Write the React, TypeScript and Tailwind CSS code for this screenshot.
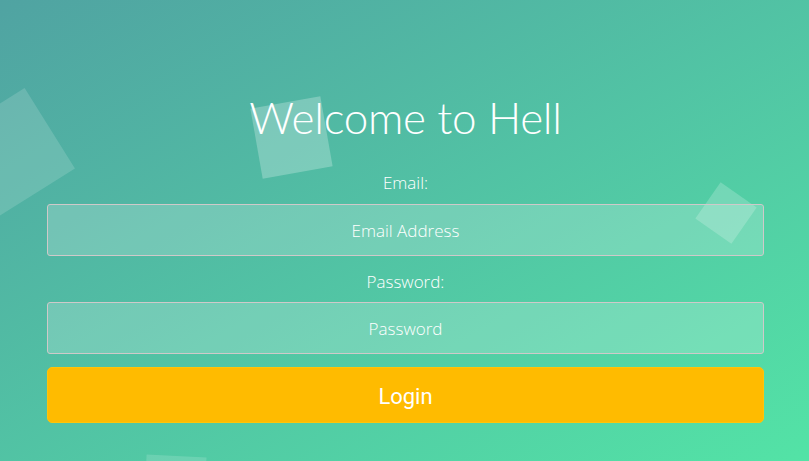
export default function App() {
  return (
    <div className="relative w-full h-[461px] overflow-hidden bg-[linear-gradient(to_bottom_right,#50a3a2_0%,#53e3a6_100%)] font-['Open_Sans',sans-serif] text-white">
      {/* floating squares */}
      <div className="absolute left-[-38px] top-[106px] w-[95px] h-[95px] bg-white/15 rotate-[58deg]" />
      <div className="absolute left-[256px] top-[102px] w-[71px] h-[71px] bg-white/25 rotate-[-10deg]" />
      <div className="absolute left-[704px] top-[191px] w-[44px] h-[44px] bg-white/20 rotate-[35deg]" />
      <div className="absolute left-[145px] top-[456px] w-[60px] h-[60px] bg-white/15 rotate-[3deg]" />

      <div className="relative ml-[47px] mr-[45px] pt-[91px] flex flex-col items-stretch text-center">
        <h1 className="font-['Lato',sans-serif] text-[44px] leading-[52px] font-light tracking-[-0.3px]">Welcome to Hell</h1>
        <label className="mt-[28px] text-[17px] leading-[24px] font-light">Email:</label>
        <input
          className="mt-[9px] h-[52px] w-full rounded-[3px] border border-[#cfc9c9] bg-white/20 text-center text-[17px] font-light text-white placeholder:text-white outline-none"
          placeholder="Email Address"
        />
        <label className="mt-[14px] text-[17px] leading-[24px] font-light">Password:</label>
        <input
          type="password"
          className="mt-[8px] h-[52px] w-full rounded-[3px] border border-[#cfc9c9] bg-white/20 text-center text-[17px] font-light text-white placeholder:text-white outline-none"
          placeholder="Password"
        />
        <button className="mt-[13px] h-[56px] w-full rounded-[5px] border border-[#ffc40a] bg-[#ffbb00] pt-[3px] font-['Roboto',sans-serif] text-[22px] text-white">
          Login
        </button>
      </div>
    </div>
  );
}
